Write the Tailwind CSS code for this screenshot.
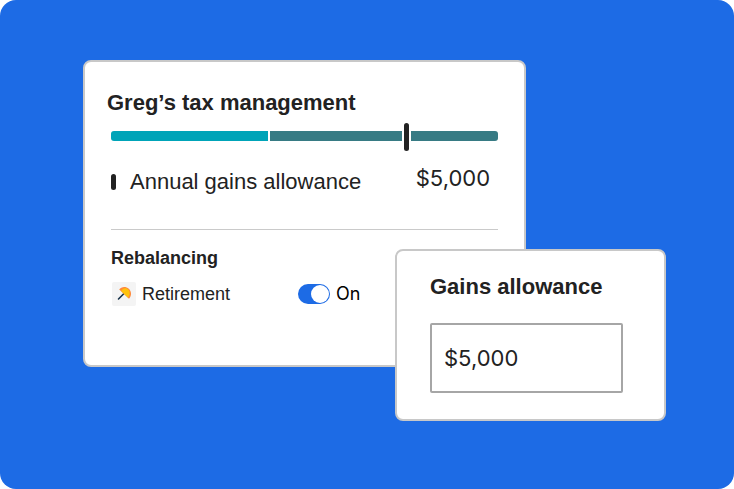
<!DOCTYPE html>
<html lang="en">
<head>
<meta charset="utf-8">
<meta name="viewport" content="width=device-width, initial-scale=1">
<title>Tax management</title>
<script src="https://cdn.jsdelivr.net/npm/@tailwindcss/browser@4"></script>
</head>
<body class="bg-white font-['Liberation_Sans',Arial,sans-serif] text-[#222]">
<main class="flex min-h-screen items-start justify-center rounded-2xl bg-[#1d6be5] pt-[60px] pr-[68px] pb-[68px] pl-[83px]">
  <div class="relative w-full max-w-[583px] pb-[54px]">
    <section class="w-[76%] rounded-lg border-2 border-[#c8c8c8] bg-white px-[26px] pt-[27px] pb-[59px]">
      <h1 class="-ml-1 text-[22px] leading-7 font-bold">Greg’s tax management</h1>
      <div class="mt-1.5 flex h-7 items-center gap-0.5" role="img" aria-label="Gains used against the annual allowance">
        <span class="mb-0.5 h-2.5 grow-[157] basis-0 rounded-l-[3px] bg-[#00a4b8]"></span>
        <span class="mb-0.5 h-2.5 grow-[133] basis-0 bg-[#377b84]"></span>
        <span class="h-7 w-[5px] rounded-full bg-[#222]"></span>
        <span class="mb-0.5 h-2.5 grow-[87] basis-0 rounded-r-[3px] bg-[#377b84]"></span>
      </div>
      <div class="flex items-start justify-between border-b border-[#cacaca] pt-[13px] pr-2 pb-[33px]">
        <div class="flex items-center gap-3.5 pt-1">
          <span class="h-4 w-[5px] rounded-full bg-[#222]"></span>
          <span class="text-[22px] leading-7">Annual gains allowance</span>
        </div>
        <span class="font-['Inter',sans-serif] text-[22px] leading-7">$5,000</span>
      </div>
      <h2 class="mt-4 text-lg leading-6 font-bold">Rebalancing</h2>
      <div class="mt-3 flex items-center">
        <div class="flex w-[187px] items-center gap-1.5 pl-px">
          <svg class="size-6" viewBox="0 0 24 24" aria-hidden="true">
            <rect width="24" height="24" rx="2" fill="#f4f4f4"/>
            <path d="M6.500 17 13 10.500" stroke="#16324a" stroke-width="1.600" stroke-linecap="round"/>
            <path d="M7.200 7.600C9 4.600 13.800 4 16.800 6.800c2.800 2.800 3 7 .2 10z" fill="#ff8a3c"/>
            <path d="M9.400 9.200C9.600 7 12.700 5.300 15.200 6.700c2.800 1.500 3.400 5.200 .8 9z" fill="#ffc20e"/>
          </svg>
          <span class="text-lg leading-6">Retirement</span>
        </div>
        <label class="flex items-center gap-1.5 text-black">
          <input type="checkbox" role="switch" checked class="h-5 w-8 appearance-none rounded-full bg-[#1d6be5] p-px before:block before:size-[18px] before:rounded-full before:bg-white checked:before:ml-3">
          <span class="font-['Inter',sans-serif] text-lg leading-6">On</span>
        </label>
      </div>
    </section>
    <section class="absolute top-[189px] right-0 w-[271px] rounded-lg border-2 border-[#c8c8c8] bg-white pt-[22px] pr-[41px] pb-[26px] pl-[33px]">
      <label for="allowance" class="block text-[22px] leading-7 font-bold">Gains allowance</label>
      <input id="allowance" type="text" value="$5,000" class="mt-[22px] block h-[70px] w-full rounded-xs border-2 border-[#a6a6a6] bg-white px-3 font-['Inter',sans-serif] text-[22px]">
    </section>
  </div>
</main>
</body>
</html>
